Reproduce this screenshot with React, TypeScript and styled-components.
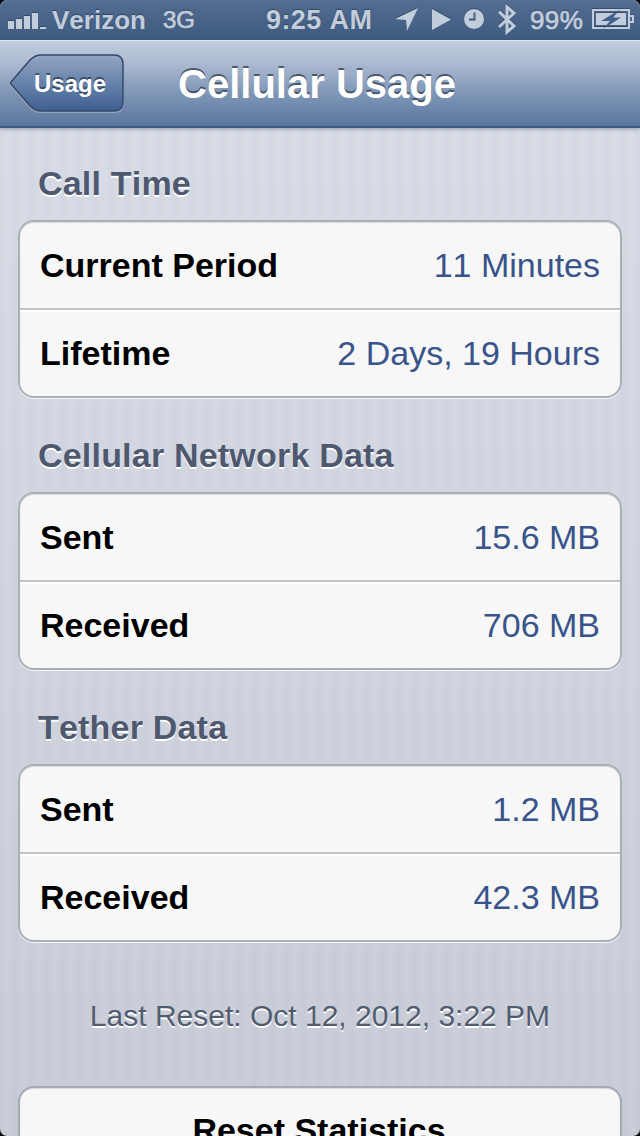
import React from "react";
import styled, { createGlobalStyle } from "styled-components";

const Global = createGlobalStyle`
  html, body { margin: 0; padding: 0; background: #000; }
  * { box-sizing: border-box; }
`;

const Screen = styled.div`
  width: 640px;
  height: 1136px;
  display: flex;
  flex-direction: column;
  overflow: hidden;
  border-radius: 7px;
  font-family: "Liberation Sans", Arial, Helvetica, sans-serif;
  font-kerning: none;
  background:
    repeating-linear-gradient(90deg, rgba(90, 105, 150, 0.025) 0 2px, rgba(90, 105, 150, 0) 3px 11px, rgba(90, 105, 150, 0.025) 12px 16px),
    linear-gradient(#d9dee7, #c8ccd7);
`;

const StatusBar = styled.header`
  height: 40px;
  flex: none;
  display: flex;
  align-items: center;
  background: linear-gradient(#536e90, #3e5a80);
  color: #c2cddb;
  text-shadow: 0 -1px 1px rgba(30, 45, 70, 0.6);
  white-space: nowrap;
`;

const StatusText = styled.span<{ $size: number; $width: number; $left: number; $light?: boolean; $spacing?: number }>`
  width: ${(p) => p.$width}px;
  margin-left: ${(p) => p.$left}px;
  font-size: ${(p) => p.$size}px;
  font-weight: ${(p) => (p.$light ? 400 : 700)};
  -webkit-text-stroke: ${(p) => (p.$light ? "0.7px #c2cddb" : "0")};
  letter-spacing: ${(p) => p.$spacing ?? 0}px;
  line-height: 40px;
`;

const Glyph = styled.svg<{ $left: number }>`
  flex: none;
  margin-left: ${(p) => p.$left}px;
  fill: #c2cddb;
  filter: drop-shadow(0 -1px 0 rgba(30, 45, 70, 0.45));
`;

const NavBar = styled.nav`
  height: 88px;
  flex: none;
  display: grid;
  grid-template-columns: 124px 1fr 130px;
  align-items: center;
  padding-left: 10px;
  padding-right: 10px;
  border-top: 1px solid #dfe5ef;
  border-bottom: 2px solid #3c5a84;
  background: linear-gradient(#c1ccde, #adbbd1 25%, #8299b9 58%, #5b769d 100%);
  box-shadow: 0 1px 4px rgba(60, 70, 90, 0.45);
`;

const BackButton = styled.button`
  position: relative;
  width: 115px;
  height: 60px;
  padding: 0 0 0 24px;
  border: 0;
  background: none;
  text-align: left;
  font: 700 24px/56px "Liberation Sans", Arial, sans-serif;
  color: #fff;
  text-shadow: 0 -2px 0 rgba(40, 55, 80, 0.75);
`;

const BackShape = styled.svg`
  position: absolute;
  left: 0;
  top: 0;
`;

const BackLabel = styled.span`
  position: relative;
`;

const Title = styled.h1`
  margin: 0;
  font-size: 40px;
  line-height: 84px;
  font-weight: 700;
  color: #fff;
  text-align: center;
  white-space: nowrap;
  text-shadow: 0 -2px 0 rgba(60, 72, 92, 0.85);
`;

const Content = styled.main`
  display: flex;
  flex-direction: column;
  padding: 16px 18px 0;
`;

const SectionTitle = styled.h2`
  margin: 0;
  height: 76px;
  padding: 19px 20px 0;
  font-size: 34px;
  line-height: 40px;
  font-weight: 700;
  letter-spacing: 0.2px;
  color: #4e586e;
  text-shadow: 0 2px 0 #fff;
`;

const Group = styled.section`
  flex: none;
  height: 178px;
  margin-bottom: 18px;
  border: 2px solid #a9aeb7;
  border-radius: 16px;
  background: #f7f7f7;
  box-shadow: 0 1px 0 rgba(255, 255, 255, 0.85), inset 0 1px 1px rgba(0, 0, 0, 0.12);
`;

const Row = styled.div`
  display: flex;
  justify-content: space-between;
  height: 86px;
  padding: 0 20px;
  font-size: 34px;
  line-height: 86px;

  & + & {
    height: 88px;
    border-top: 2px solid #c3c4c6;
    box-shadow: inset 0 2px 0 #fff;
  }
`;

const Label = styled.span`
  font-weight: 700;
  color: #000;
`;

const Value = styled.span`
  color: #38548a;
`;

const ResetNote = styled.p`
  margin: 36px 0 50px;
  height: 40px;
  font-size: 30px;
  line-height: 40px;
  text-align: center;
  color: #525c70;
  text-shadow: 0 2px 0 #fff;
`;

const ResetButton = styled.button`
  flex: none;
  height: 90px;
  border: 2px solid #a5a9b3;
  border-radius: 16px;
  background: #f7f7f7;
  box-shadow: inset 0 1px 1px rgba(0, 0, 0, 0.12);
  font: 700 34px/84px "Liberation Sans", Arial, sans-serif;
  color: #000;
  padding: 0 2px 2px 0;
`;

const sections = [
  { title: "Call Time", rows: [["Current Period", "11 Minutes"], ["Lifetime", "2 Days, 19 Hours"]] },
  { title: "Cellular Network Data", rows: [["Sent", "15.6 MB"], ["Received", "706 MB"]] },
  { title: "Tether Data", rows: [["Sent", "1.2 MB"], ["Received", "42.3 MB"]] },
];

export default function App() {
  return (
    <>
      <Global />
      <Screen>
        <StatusBar>
          <Glyph $left={8} width="38" height="40">
            <path d="M0 21h6v8H0zM8 19h6v10H8zM16 16h6v13h-6zM24 13h6v16h-6zM32 27h6v2h-6z" />
          </Glyph>
          <StatusText $left={6} $width={112} $size={26}>Verizon</StatusText>
          <StatusText $left={-1} $width={103} $size={24} $light>3G</StatusText>
          <StatusText $left={0} $width={128} $size={27} $spacing={0.4}>9:25 AM</StatusText>
          <Glyph $left={1} width="24" height="40">
            <path d="M23 8L12 31L11 20L0 19Z" />
          </Glyph>
          <Glyph $left={13} width="20" height="40">
            <path d="M0 9L19 19.500L0 30Z" />
          </Glyph>
          <Glyph $left={12} width="20" height="40">
            <path fillRule="evenodd" d="M10 9a10 10 0 1 0 0 20a10 10 0 1 0 0-20M9.500 12.500h2v8H5v-2h4.500z" />
          </Glyph>
          <Glyph $left={14} width="20" height="40">
            <path d="M1 11.500L16 26L9 32V7L16 13L1 27" style={{ fill: "none" }} stroke="#c2cddb" strokeWidth="3" />
          </Glyph>
          <StatusText $left={12} $width={62} $size={26} $light $spacing={0.4}>99%</StatusText>
          <Glyph $left={0} width="43" height="40">
            <path fillRule="evenodd" d="M0 9h38v6h4v8h-4v6H0zM2 11v16h34V11z" />
            <path d="M4 13h30v12H4z" />
            <path d="M38 17h2v4h-2z" style={{ fill: "#48658a" }} />
            <path d="M28 9.500L9 21h9l-7 8L29 17.500h-8z" style={{ fill: "#42608a" }} />
          </Glyph>
        </StatusBar>
        <NavBar>
          <BackButton>
            <BackShape width="115" height="60">
              <defs>
                <linearGradient id="back" x1="0" y1="0" x2="0" y2="1">
                  <stop offset="0" stopColor="#92a5c3" />
                  <stop offset=".5" stopColor="#6783ab" />
                  <stop offset="1" stopColor="#3f5f91" />
                </linearGradient>
              </defs>
              <path d="M1 31Q0 30 1 29L20 7Q25 2 31 2H104Q113 2 113 11V49Q113 58 104 58H31Q25 58 20 53Z" fill="none" stroke="#b5c2d5" strokeOpacity=".6" strokeWidth="2" />
              <path d="M1 30Q0 29 1 28L20 6Q25 1 31 1H104Q113 1 113 10V48Q113 57 104 57H31Q25 57 20 52Z" fill="url(#back)" stroke="#354763" strokeWidth="1.500" />
            </BackShape>
            <BackLabel>Usage</BackLabel>
          </BackButton>
          <Title>Cellular Usage</Title>
        </NavBar>
        <Content>
          {sections.map((s) => (
            <React.Fragment key={s.title}>
              <SectionTitle>{s.title}</SectionTitle>
              <Group>
                {s.rows.map(([label, value]) => (
                  <Row key={label}>
                    <Label>{label}</Label>
                    <Value>{value}</Value>
                  </Row>
                ))}
              </Group>
            </React.Fragment>
          ))}
          <ResetNote>Last Reset: Oct 12, 2012, 3:22 PM</ResetNote>
          <ResetButton>Reset Statistics</ResetButton>
        </Content>
      </Screen>
    </>
  );
}
